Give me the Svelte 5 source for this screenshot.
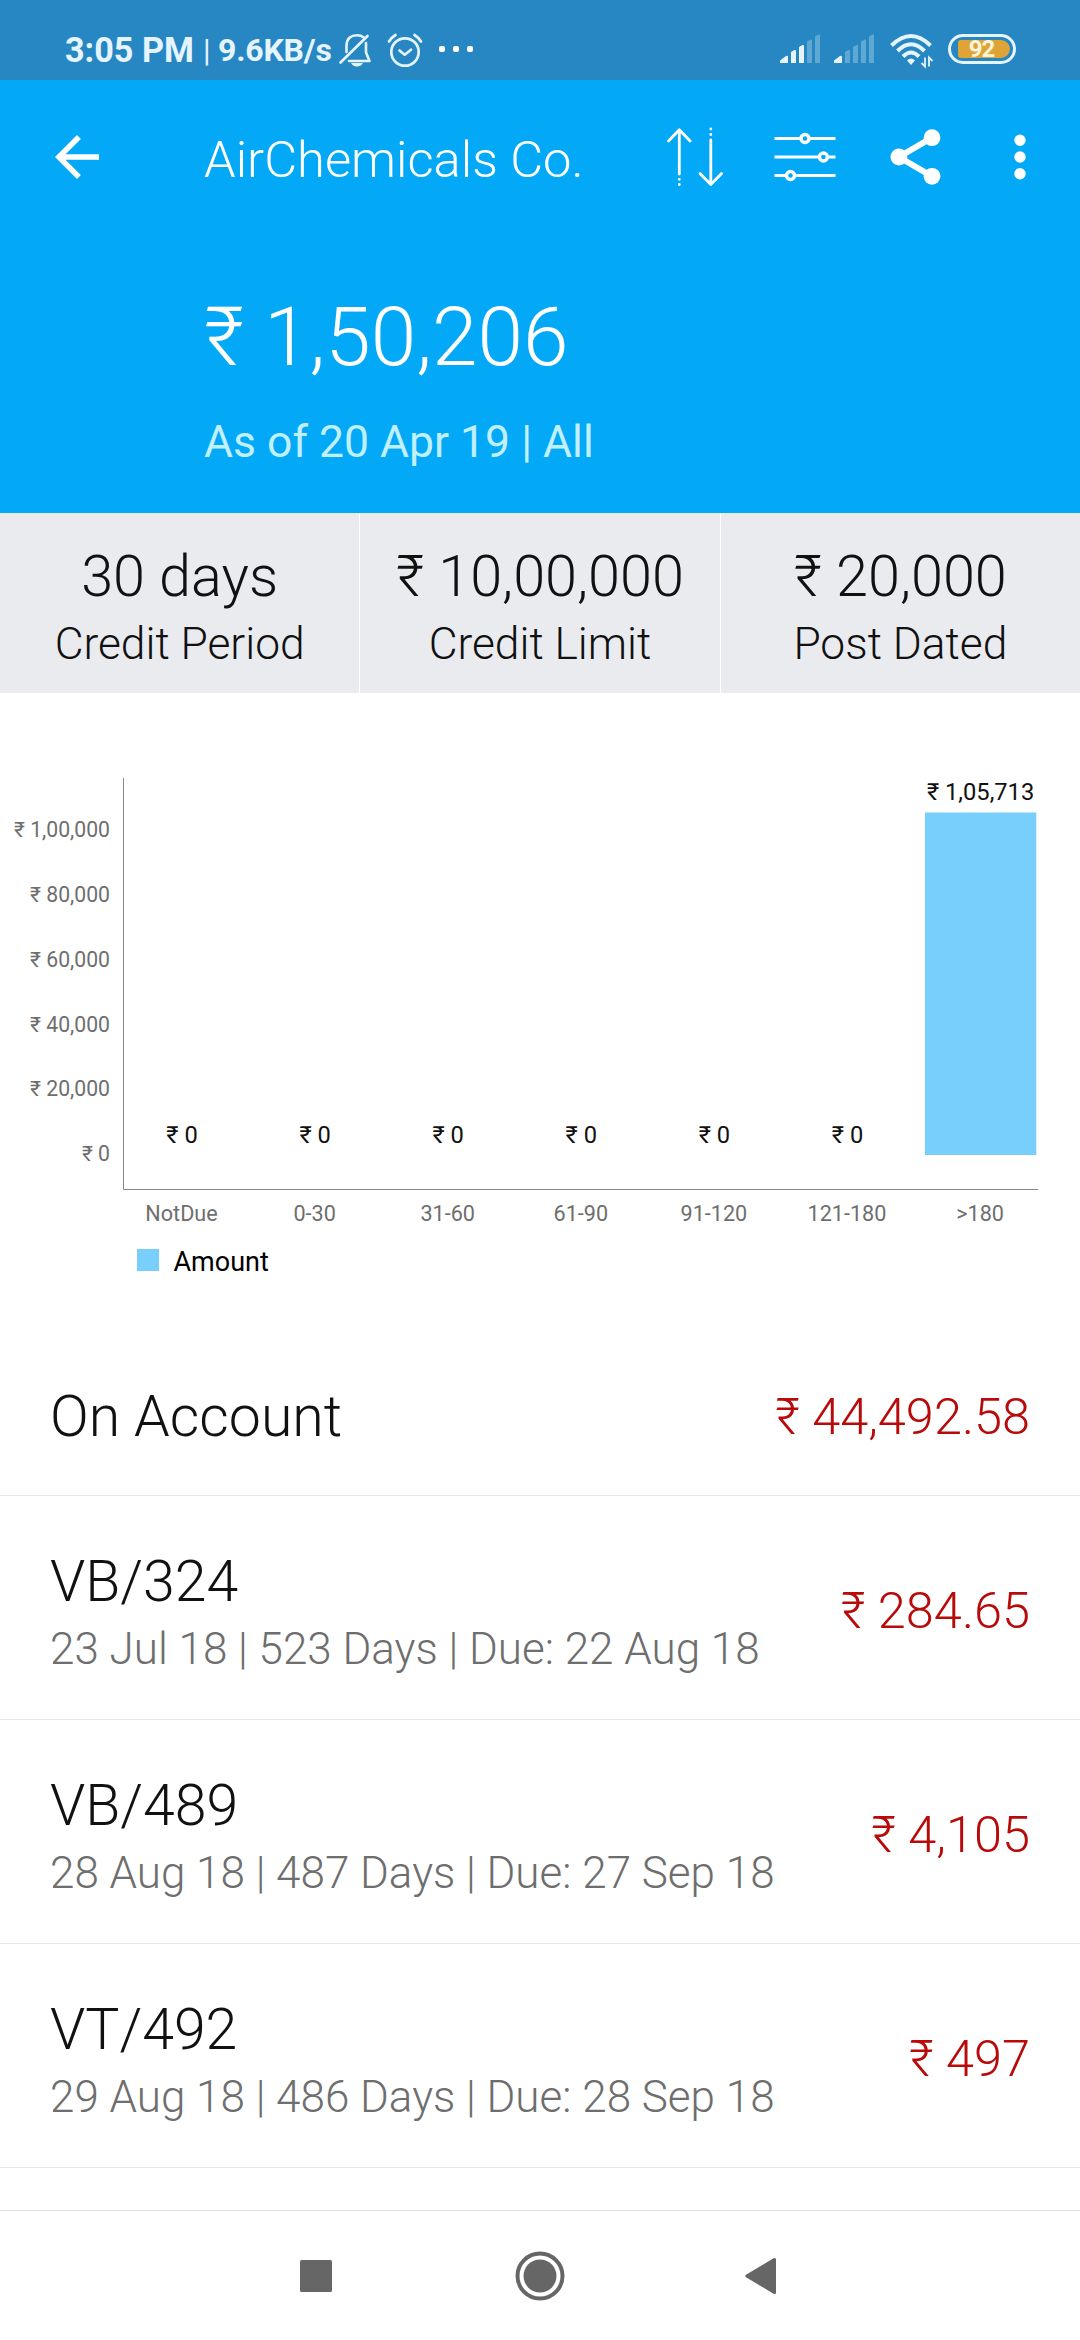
<script lang="ts">
  interface Bill {
    ref: string;
    detail?: string;
    amount: string;
  }

  const stats = [
    { value: '30 days', label: 'Credit Period' },
    { value: '₹ 10,00,000', label: 'Credit Limit' },
    { value: '₹ 20,000', label: 'Post Dated' }
  ];

  const ageing = [
    { range: 'NotDue', amount: 0, text: '₹ 0' },
    { range: '0-30', amount: 0, text: '₹ 0' },
    { range: '31-60', amount: 0, text: '₹ 0' },
    { range: '61-90', amount: 0, text: '₹ 0' },
    { range: '91-120', amount: 0, text: '₹ 0' },
    { range: '121-180', amount: 0, text: '₹ 0' },
    { range: '>180', amount: 105713, text: '₹ 1,05,713' }
  ];

  const ticks = [
    { amount: 100000, text: '₹ 1,00,000' },
    { amount: 80000, text: '₹ 80,000' },
    { amount: 60000, text: '₹ 60,000' },
    { amount: 40000, text: '₹ 40,000' },
    { amount: 20000, text: '₹ 20,000' },
    { amount: 0, text: '₹ 0' }
  ];

  const bills: Bill[] = [
    { ref: 'On Account', amount: '₹ 44,492.58' },
    { ref: 'VB/324', detail: '23 Jul 18 | 523 Days | Due: 22 Aug 18', amount: '₹ 284.65' },
    { ref: 'VB/489', detail: '28 Aug 18 | 487 Days | Due: 27 Sep 18', amount: '₹ 4,105' },
    { ref: 'VT/492', detail: '29 Aug 18 | 486 Days | Due: 28 Sep 18', amount: '₹ 497' }
  ];

  // chart geometry, in svg units
  const zeroY = 462;
  const scale = 342.5 / 105713;
  const firstX = 182;
  const step = 133.1;
  const barWidth = 111.4;

  const yOf = (amount: number) => zeroY - amount * scale;
  const xOf = (index: number) => firstX + index * step;

  // lit bars per SIM
  const sims = [3, 1];
  const signalBars = ['M0 29V26.5L6 22q2-1 2 1v6z', 'M11 29V18l3.5-2q1.5-.5 1.5 1v12z', 'M19 29V13l3.5-2q1.5-.5 1.5 1v17z', 'M27 29V7.5l3.5-2q1.5-.5 1.5 1V29z', 'M35 29V2.5l3.5-2q1.5-.5 1.5 1V29z'];
</script>

<div class="screen">
  <div class="status-bar">
    <span class="time">3:05 PM</span>
    <span class="pipe">|</span>
    <span class="speed">9.6KB/s</span>
    <svg class="bell" width="34" height="36" viewBox="0 0 34 36" fill="none" stroke="currentColor" stroke-width="2.6" stroke-linecap="round" stroke-linejoin="round">
      <path d="M2.5 30.5 29.5 4" />
      <path d="M8.5 20V14C8.5 6 13.5 3.2 19 3.2c3 0 5 .8 6.5 2" />
      <path d="M28 11v9.5l3.5 8.5H11" />
      <path d="M13 31h12q-2 3.500-6 3.500T13 31z" fill="currentColor" stroke="none" />
    </svg>
    <svg class="alarm" width="36" height="36" viewBox="0 0 36 36" fill="none" stroke="currentColor" stroke-width="2.7" stroke-linecap="round">
      <circle cx="18" cy="20" r="13.7" />
      <path d="M2 9.5q2.500-4 6.500-6.500M34 9.500Q31.500 5.500 27.500 3" />
      <path d="m12.500 18.500 5.200 4.200 6.300-5" stroke-linejoin="round" />
    </svg>
    <svg class="more" width="36" height="8" viewBox="0 0 36 8" fill="#fff">
      <rect x="1" y="1" width="6" height="6" rx="2" />
      <rect x="15" y="1" width="6" height="6" rx="2" />
      <rect x="29" y="1" width="6" height="6" rx="2" />
    </svg>

    <div class="status-right">
      {#each sims as lit}
        <svg class="signal" width="40" height="30" viewBox="0 0 40 30" fill="currentColor">
          {#each signalBars as bar, i}
            <path d={bar} opacity={i < lit ? 1 : 0.3} />
          {/each}
        </svg>
      {/each}
      <svg class="wifi" width="44" height="36" viewBox="0 0 44 36" fill="none" stroke="currentColor" stroke-width="4">
        <path d="M2.500 12.500Q22-6.500 41.500 12.500" />
        <path d="M8.500 18Q22 4.500 35.500 18" />
        <path d="M14 23.500Q22 15.500 30 23.500" />
        <path d="M18 27.500q4-4 8 0L22 32z" fill="currentColor" stroke="none" />
        <path d="M36 24.500v9l-3.500-3.500M40 33.500v-9l3.500 3.500" stroke-width="1.800" />
      </svg>
      <div class="battery"><div class="charge">92</div></div>
    </div>
  </div>

  <header>
    <div class="toolbar">
      <svg class="back" width="44" height="44" viewBox="4 4 16 16" fill="#fff">
        <path d="M20 11H7.830l5.590-5.590L12 4l-8 8 8 8 1.410-1.410L7.830 13H20z" />
      </svg>
      <h1>AirChemicals Co.</h1>
      <svg class="sort" width="58" height="60" viewBox="0 0 58 60" fill="none" stroke="#fff" stroke-width="2.8" stroke-linecap="round" stroke-linejoin="round">
        <path d="M13.300 3v44M2.500 14 13.300 2.800 24.100 14" />
        <path d="M44.800 13v44M34 46.500l10.800 11 10.800-11" />
        <path d="M13.300 52.300v.01M13.300 57.500v.01M44.800 2v.01M44.800 7.500v.01" />
      </svg>
      <svg class="filter" width="62" height="50" viewBox="0 0 62 50" fill="none" stroke="#fff" stroke-width="2.8">
        <path d="M.5 6.500h25.500M36 6.500h25.500M.5 25h44M54.500 25h7M.5 43.500h11M21.500 43.500h40" />
        <g stroke-width="3.400">
          <circle cx="31" cy="6.500" r="4" />
          <circle cx="49.400" cy="25" r="4" />
          <circle cx="16.500" cy="43.500" r="4" />
        </g>
      </svg>
      <svg class="share" width="51" height="56" viewBox="0 0 51 56" fill="#fff">
        <path d="M42 8.700 8.900 28 42 47.300" fill="none" stroke="#fff" stroke-width="6" />
        <circle cx="42" cy="8.700" r="8.400" />
        <circle cx="8.900" cy="28" r="8.400" />
        <circle cx="42" cy="47.300" r="8.400" />
      </svg>
      <svg class="menu" width="12" height="46" viewBox="0 0 12 46" fill="#fff">
        <circle cx="6" cy="6.300" r="5.700" />
        <circle cx="6" cy="23" r="5.700" />
        <circle cx="6" cy="39.700" r="5.700" />
      </svg>
    </div>
    <p class="total">₹ 1,50,206</p>
    <p class="as-of">As of 20 Apr 19 | All</p>
  </header>

  <section class="stats">
    {#each stats as stat}
      <div class="stat">
        <span class="stat-value">{stat.value}</span>
        <span class="stat-label">{stat.label}</span>
      </div>
    {/each}
  </section>

  <svg class="chart" width="1080" height="645" viewBox="0 0 1080 645">
    <path class="axis" d="M123.500 85V496.500H1038" />
    {#each ticks as tick}
      <text class="tick" x="110" y={yOf(tick.amount) + 6.2} text-anchor="end">{tick.text}</text>
    {/each}
    {#each ageing as bucket, i}
      {#if bucket.amount > 0}
        <rect class="bar" x={xOf(i) - barWidth / 2} y={yOf(bucket.amount)} width={barWidth} height={bucket.amount * scale} />
      {/if}
      <text class="value" x={xOf(i)} y={yOf(bucket.amount) - 12.5} text-anchor="middle">{bucket.text}</text>
      <text class="range" x={xOf(i) - 0.5} y="528" text-anchor="middle">{bucket.range}</text>
    {/each}
    <rect class="bar" x="137" y="556" width="22" height="22" />
    <text class="legend" x="173.500" y="578">Amount</text>
  </svg>

  <ul class="bills">
    {#each bills as bill}
      <li class:single={!bill.detail}>
        <div class="info">
          <span class="ref">{bill.ref}</span>
          {#if bill.detail}<span class="detail">{bill.detail}</span>{/if}
        </div>
        <span class="amount">{bill.amount}</span>
      </li>
    {/each}
  </ul>

  <nav>
    <svg width="32" height="32" viewBox="0 0 32 32"><rect width="32" height="32" rx="1.500" /></svg>
    <svg class="home" width="50" height="50" viewBox="0 0 50 50">
      <circle cx="25" cy="25" r="22.500" fill="none" stroke="#666" stroke-width="4" />
      <circle cx="25" cy="25" r="16.500" />
    </svg>
    <svg width="32" height="38" viewBox="0 0 32 38"><path d="M1 17.700 28.500 1.300q2.500-1 2.500 1.200v33q0 2.200-2.500 1.200L1 20.300q-1.500-1.300 0-2.600z" /></svg>
  </nav>
</div>

<style>
  :global(body) { margin: 0; background: #fff; }
  .screen { display: flex; flex-direction: column; width: 1080px; height: 2340px; overflow: hidden; background: #fff; color: #111; font-family: Roboto, sans-serif; font-weight: 300; }
  h1, p, ul { margin: 0; padding: 0; font-weight: inherit; }
  svg { display: block; flex: none; }

  .status-bar { display: flex; flex: none; align-items: center; box-sizing: border-box; height: 80px; padding: 20px 64px 0 65px; background: #2787c2; color: #e6f4ff; white-space: nowrap; }
  .time { width: 138px; font-size: 34.2px; font-weight: 700; }
  .pipe { width: 15px; font-size: 31px; font-weight: 400; }
  .speed { width: 120px; font-size: 32px; font-weight: 700; letter-spacing: -.2px; }
  .bell { margin-top: 0; }
  .alarm { margin: 0 0 0 15px; }
  .more { margin: -2px 0 0 15px; }
  .status-right { display: flex; align-items: center; margin: -2px 0 0 auto; }
  .signal { margin-right: 14px; }
  .wifi { margin: 3px 15px 0 1px; }
  .battery { box-sizing: border-box; width: 68px; height: 30px; border: 3px solid #e6f4ff; border-radius: 15px; padding: 3px; }
  .charge { height: 18px; margin-left: 4px; border-radius: 3px 9px 9px 3px; background: #e0a336; color: #fff5dc; font-size: 24px; font-weight: 700; line-height: 19px; letter-spacing: -1px; text-align: center; text-indent: -5px; }

  header { flex: none; box-sizing: border-box; height: 433px; background: #03a9f6; color: #fff; }
  .toolbar { display: flex; align-items: center; height: 154px; padding: 0 54px 0 55px; }
  h1 { flex: 1; padding: 5px 0 0 105px; font-size: 50.7px; line-height: 60px; white-space: nowrap; }
  .filter { margin-left: 50px; }
  .share { margin-left: 54px; }
  .menu { margin-left: 73px; }
  .total { padding: 53px 0 0 204px; font-size: 82px; line-height: 100px; }
  .as-of { padding: 29px 0 0 204px; color: #c0f0ff; font-size: 44.5px; font-weight: 400; line-height: 52px; }

  .stats { display: flex; flex: none; height: 180px; background: #eaebef; }
  .stat { display: flex; flex: 1; flex-direction: column; align-items: center; gap: 7px; box-sizing: border-box; padding-top: 30px; }
  .stat + .stat { border-left: 1px solid #fff; }
  .stat-value { font-size: 57.6px; line-height: 68px; }
  .stat-label { font-size: 44.3px; line-height: 52px; }

  .chart { font-weight: 400; }
  .axis { fill: none; stroke: #888; stroke-width: 1; }
  .bar { fill: #78cffb; }
  .tick, .range { fill: #6e6e6e; }
  .tick { font-size: 21.200px; }
  .range { font-size: 21.600px; }
  .value { fill: #111; font-size: 23.700px; }
  .legend { fill: #000; font-size: 27px; }

  .bills { flex: 1; list-style: none; }
  li { display: flex; align-items: center; justify-content: space-between; box-sizing: border-box; height: 224px; padding: 7px 50px 0 50px; border-bottom: 1px solid #e6e6e6; }
  li.single { height: 158px; padding-top: 0; }
  .info { display: flex; flex-direction: column; gap: 7px; padding-top: 1px; }
  .single .info { padding-top: 0; }
  .ref { font-size: 57.2px; line-height: 68px; }
  .detail { color: #6e6e6e; font-size: 44px; line-height: 52px; }
  .amount { color: #b90a0a; font-size: 50.5px; line-height: 60px; }

  nav { display: flex; flex: none; align-items: center; justify-content: space-between; box-sizing: border-box; height: 130px; border-top: 1px solid #e0e0e0; padding: 0 303px 0 300px; }
  nav svg { fill: #666; }
  .home { margin-left: 3px; }
</style>
